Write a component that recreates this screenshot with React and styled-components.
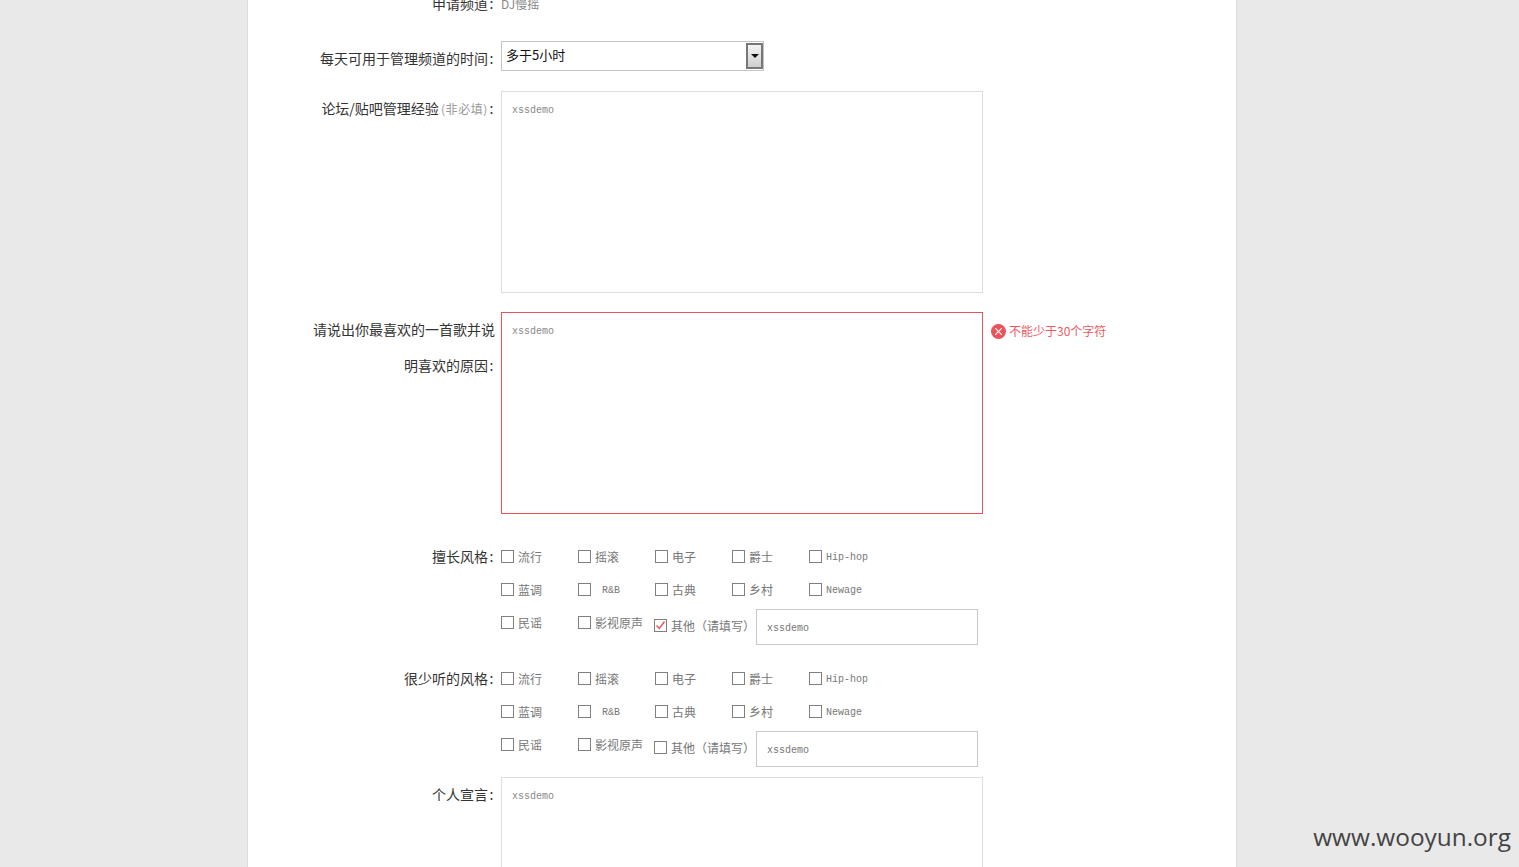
import styled, { createGlobalStyle } from "styled-components";

const GlobalStyle = createGlobalStyle`
  html, body {
    margin: 0;
    height: 100%;
    overflow: hidden;
    background: #e9e9e9;
  }
  #root {
    height: 100%;
  }
`;

const CJK = `"Noto Sans CJK SC", "Liberation Sans", sans-serif`;
const MONO = `"Liberation Mono", "Noto Sans CJK SC", monospace`;

const Page = styled.div`
  height: 867px;
  overflow: hidden;
  font-family: ${CJK};
`;

const Panel = styled.main`
  width: 988px;
  height: 100%;
  margin-left: 247px;
  background: #fff;
  border-left: 1px solid #ddd;
  border-right: 1px solid #ddd;
  overflow: hidden;
`;

const Form = styled.form`
  display: flex;
  flex-direction: column;
  margin-top: -14px;
  padding-left: 64px;
`;

const Row = styled.div`
  display: flex;
  align-items: flex-start;
  margin-bottom: ${(p) => p.$gap || 0}px;
`;

const Label = styled.label`
  flex: none;
  width: 183px;
  margin: -1px 6px 0 0;
  font-size: 14px;
  line-height: 36px;
  color: #333;
  text-align: right;
`;

const Colon = styled.span`
  display: inline-block;
  width: 7px;
  text-align: center;
`;

const Hint = styled.span`
  margin-left: 2px;
  font-size: 12px;
  letter-spacing: 0.6px;
  color: #999;
`;

const Static = styled.span`
  font-size: 12px;
  line-height: 36px;
  color: #888;
`;

const Select = styled.div`
  box-sizing: border-box;
  display: flex;
  align-items: center;
  justify-content: space-between;
  width: 263px;
  height: 30px;
  padding: 1px 0 1px 4px;
  border: 1px solid #c4c4c4;
  font-size: 13px;
  line-height: 26px;
  color: #111;
`;

const SelectValue = styled.span`
  margin-top: -3px;
`;

const SelectArrow = styled.span`
  box-sizing: border-box;
  display: flex;
  align-items: center;
  justify-content: center;
  width: 17px;
  height: 26px;
  border: 2px solid #777;
  background: linear-gradient(#f4f4f4, #cfcfcf);

  &::after {
    content: "";
    border-left: 4px solid transparent;
    border-right: 4px solid transparent;
    border-top: 4px solid #111;
  }
`;

const TextArea = styled.textarea`
  box-sizing: border-box;
  display: block;
  flex: none;
  width: 482px;
  height: 202px;
  padding: 12px 10px;
  border: 1px solid ${(p) => (p.$error ? "#e9545a" : "#ddd")};
  outline: none;
  resize: none;
  overflow: hidden;
  background: #fff;
  font-family: ${MONO};
  font-size: 10px;
  line-height: 14px;
  color: #888;
`;

const ErrorText = styled.div`
  display: flex;
  align-items: center;
  gap: 3px;
  margin: 11px 0 0 8px;
  font-size: 12px;
  line-height: 16px;
  color: #ee5a5f;
`;

const Options = styled.div`
  display: flex;
  flex-direction: column;
  padding-top: 2px;
`;

const OptionRow = styled.div`
  display: flex;
  align-items: flex-start;
  height: 33px;
`;

const Option = styled.label`
  display: flex;
  align-items: center;
  flex: none;
  width: 77px;
  height: 31px;
  font-family: ${(p) => (p.$latin ? MONO : CJK)};
  font-size: ${(p) => (p.$latin ? 10 : 12)}px;
  color: #777;
  white-space: nowrap;
`;

const OptionText = styled.span`
  margin-left: ${(p) => p.$indent || 4}px;
  margin-top: ${(p) => (p.$latin ? 2 : 0)}px;
`;

const Box = styled.span`
  box-sizing: border-box;
  display: flex;
  align-items: center;
  justify-content: center;
  flex: none;
  width: 13px;
  height: 13px;
  border: 1px solid #808080;
  background: #fff;
`;

const OtherOption = styled(Option)`
  width: 102px;
  height: 32px;
  margin: 2px 0 0 -1px;
`;

const OtherInput = styled.input`
  box-sizing: border-box;
  flex: none;
  width: 222px;
  height: 36px;
  margin-top: 2px;
  padding: 2px 10px 0;
  border: 1px solid #c8c8c8;
  outline: none;
  font-family: ${MONO};
  font-size: 10px;
  color: #777;
`;

const Watermark = styled.div`
  position: absolute;
  right: 8px;
  bottom: 13px;
  font-family: "Open Sans", sans-serif;
  font-size: 24.4px;
  line-height: 34px;
  color: #444;
`;

const rows = [
  ["流行", "摇滚", "电子", "爵士", "Hip-hop"],
  ["蓝调", "R&B", "古典", "乡村", "Newage"],
];

const isLatin = (name) => /^[A-Za-z&-]+$/.test(name);

const Check = () => (
  <svg width="11" height="11" viewBox="0 0 11 11" fill="none">
    <path d="M1.5 5.5 L4.3 8.5 L9.5 1.5" stroke="#e9545a" strokeWidth="1.4" />
  </svg>
);

const ErrorIcon = () => (
  <svg width="15" height="15" viewBox="0 0 15 15">
    <circle cx="7.5" cy="7.5" r="7.5" fill="#ea5359" />
    <path d="M4.2 4.2 L10.8 10.8 M10.8 4.2 L4.2 10.8" stroke="#fff" strokeWidth="1.1" />
  </svg>
);

const StyleOptions = ({ checked }) => (
  <Options>
    {rows.map((row) => (
      <OptionRow key={row[0]}>
        {row.map((name) => (
          <Option key={name} $latin={isLatin(name)}>
            <Box />
            <OptionText $latin={isLatin(name)} $indent={name === "R&B" ? 11 : 4}>
              {name}
            </OptionText>
          </Option>
        ))}
      </OptionRow>
    ))}
    <OptionRow>
      <Option>
        <Box />
        <OptionText>民谣</OptionText>
      </Option>
      <Option>
        <Box />
        <OptionText>影视原声</OptionText>
      </Option>
      <OtherOption>
        <Box>{checked && <Check />}</Box>
        <OptionText>其他（请填写）</OptionText>
      </OtherOption>
      <OtherInput readOnly defaultValue="xssdemo" />
    </OptionRow>
  </Options>
);

export default function App() {
  return (
    <Page>
      <GlobalStyle />
      <Panel>
        <Form>
          <Row $gap={19}>
            <Label>申请频道<Colon>:</Colon></Label>
            <Static>DJ慢摇</Static>
          </Row>
          <Row $gap={15}>
            <Label>每天可用于管理频道的时间<Colon>:</Colon></Label>
            <Select>
              <SelectValue>多于5小时</SelectValue>
              <SelectArrow />
            </Select>
          </Row>
          <Row $gap={19}>
            <Label>
              论坛/贴吧管理经验<Hint>(非必填)</Hint><Colon>:</Colon>
            </Label>
            <TextArea readOnly defaultValue="xssdemo" />
          </Row>
          <Row $gap={25}>
            <Label>请说出你最喜欢的一首歌并说明喜欢的原因<Colon>:</Colon></Label>
            <TextArea $error readOnly defaultValue="xssdemo" />
            <ErrorText>
              <ErrorIcon />
              不能少于30个字符
            </ErrorText>
          </Row>
          <Row $gap={21}>
            <Label>擅长风格<Colon>:</Colon></Label>
            <StyleOptions checked />
          </Row>
          <Row $gap={15}>
            <Label>很少听的风格<Colon>:</Colon></Label>
            <StyleOptions />
          </Row>
          <Row>
            <Label>个人宣言<Colon>:</Colon></Label>
            <TextArea readOnly defaultValue="xssdemo" />
          </Row>
        </Form>
      </Panel>
      <Watermark>www.wooyun.org</Watermark>
    </Page>
  );
}
